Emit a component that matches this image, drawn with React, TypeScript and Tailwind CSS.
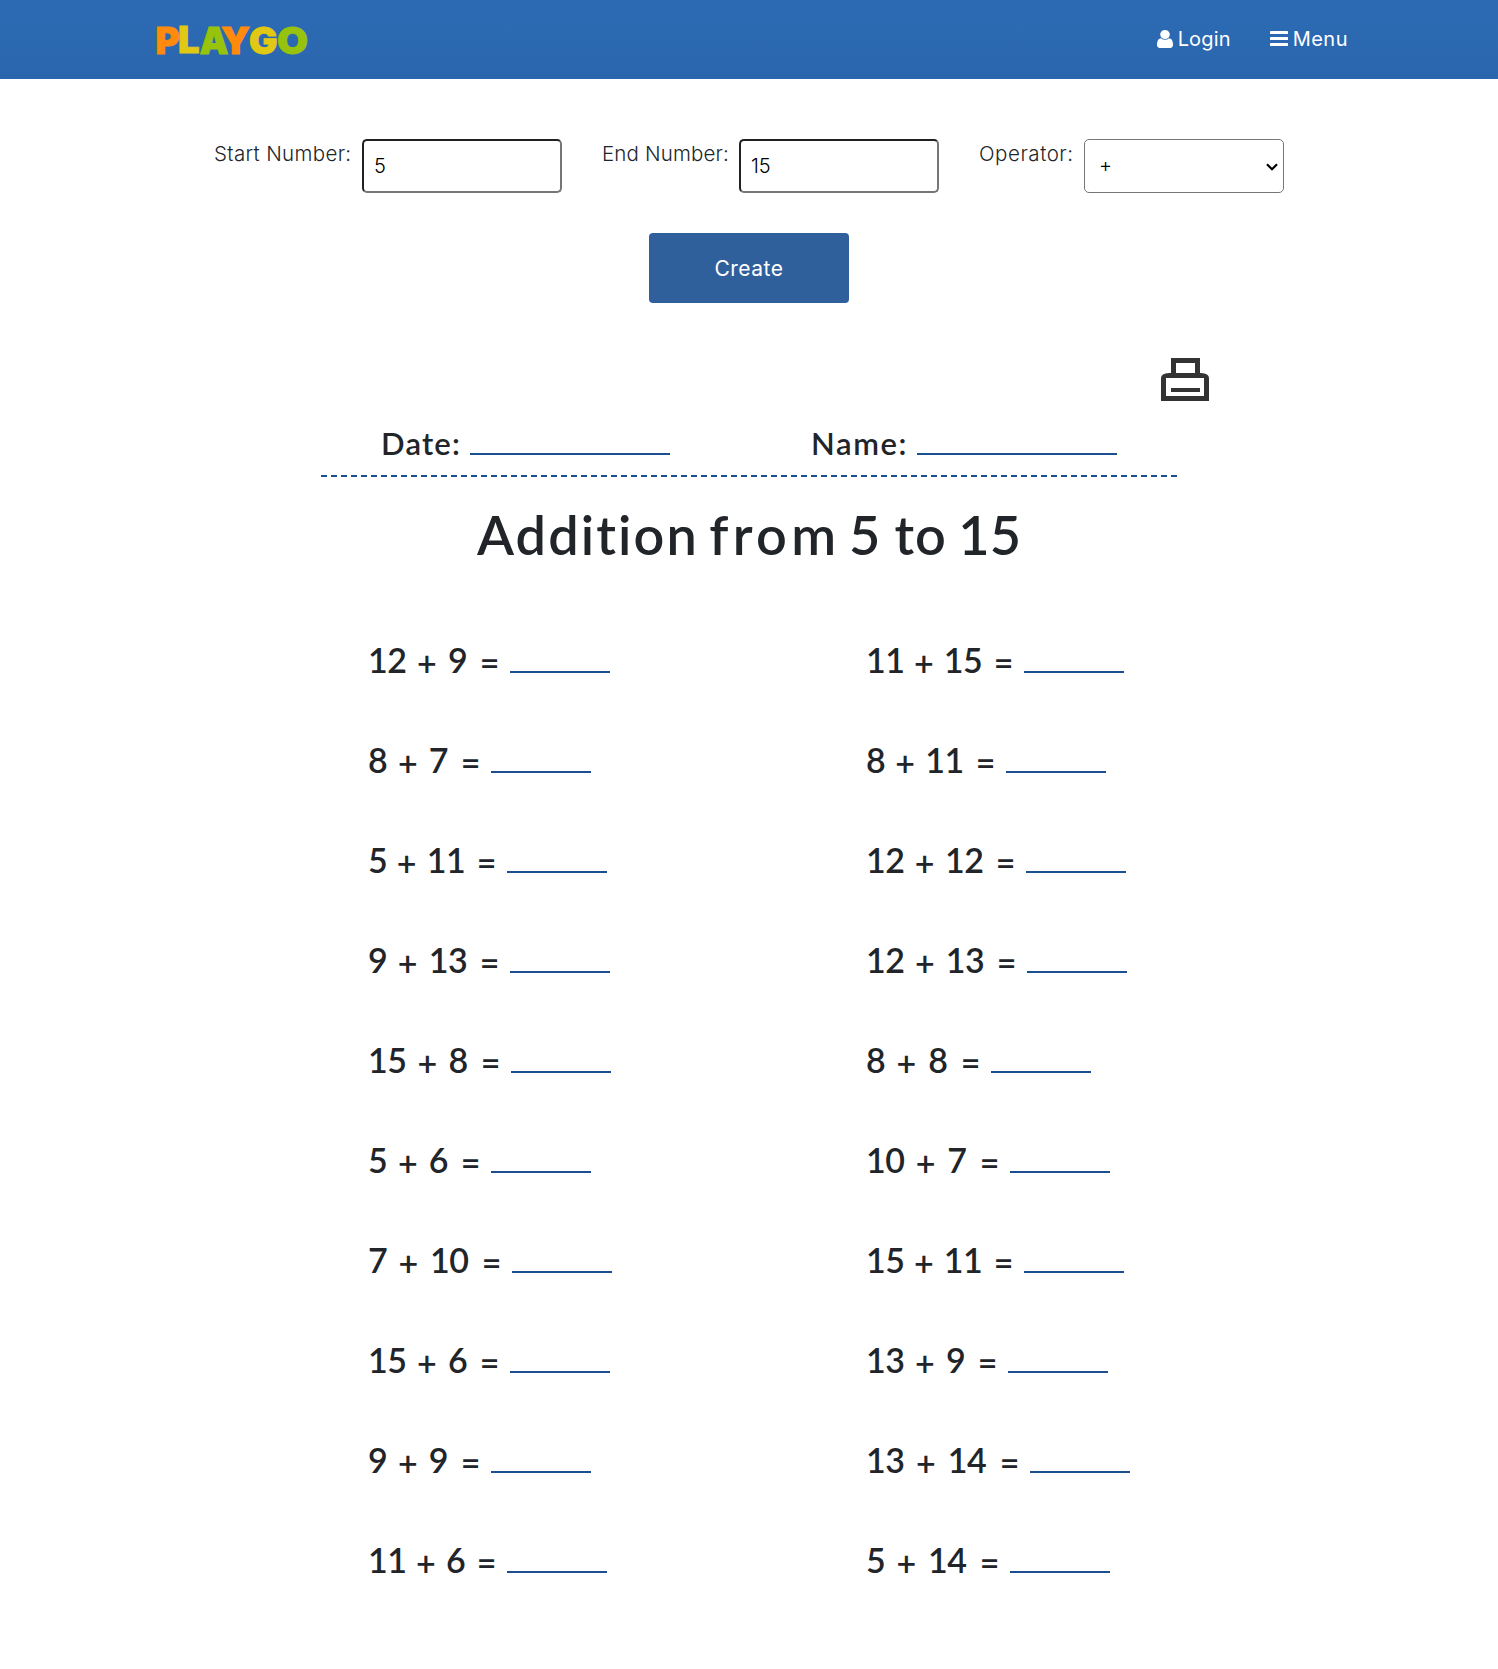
type Problem = { tokens: string[]; width: string };

const leftProblems: Problem[] = [
  { tokens: ['12', '+', '9', '='], width: 'w-[131px]' },
  { tokens: ['8', '+', '7', '='], width: 'w-[112px]' },
  { tokens: ['5', '+', '11', '='], width: 'w-[128px]' },
  { tokens: ['9', '+', '13', '='], width: 'w-[131px]' },
  { tokens: ['15', '+', '8', '='], width: 'w-[132px]' },
  { tokens: ['5', '+', '6', '='], width: 'w-[112px]' },
  { tokens: ['7', '+', '10', '='], width: 'w-[133px]' },
  { tokens: ['15', '+', '6', '='], width: 'w-[131px]' },
  { tokens: ['9', '+', '9', '='], width: 'w-[112px]' },
  { tokens: ['11', '+', '6', '='], width: 'w-[128px]' },
];

const rightProblems: Problem[] = [
  { tokens: ['11', '+', '15', '='], width: 'w-[147px]' },
  { tokens: ['8', '+', '11', '='], width: 'w-[129px]' },
  { tokens: ['12', '+', '12', '='], width: 'w-[149px]' },
  { tokens: ['12', '+', '13', '='], width: 'w-[150px]' },
  { tokens: ['8', '+', '8', '='], width: 'w-[114px]' },
  { tokens: ['10', '+', '7', '='], width: 'w-[133px]' },
  { tokens: ['15', '+', '11', '='], width: 'w-[147px]' },
  { tokens: ['13', '+', '9', '='], width: 'w-[131px]' },
  { tokens: ['13', '+', '14', '='], width: 'w-[153px]' },
  { tokens: ['5', '+', '14', '='], width: 'w-[133px]' },
];

function Logo() {
  const letters = [
    { ch: 'P', x: 5.5, y: 53.5, len: 24, fill: '#ff8a0c' },
    { ch: 'L', x: 28, y: 52.5, len: 21.5, fill: '#e0c814' },
    { ch: 'Y', x: 71, y: 53.5, len: 29, fill: '#ff8a0c' },
    { ch: 'A', x: 49.5, y: 53.5, len: 29, fill: '#98c30c' },
    { ch: 'G', x: 99, y: 53.5, len: 28.5, fill: '#e0c814' },
    { ch: 'O', x: 127, y: 53.5, len: 31, fill: '#98c30c' },
  ];
  return (
    <svg width="170" height="79" viewBox="0 0 170 79" aria-label="PlayGo" className="block">
      {letters.map((l) => (
        <text
          key={l.ch}
          x={l.x}
          y={l.y}
          textLength={l.len}
          lengthAdjust="spacingAndGlyphs"
          fill={l.fill}
          stroke={l.fill}
          strokeWidth="0.9"
          fontFamily="Inter, sans-serif"
          fontWeight="900"
          fontSize="37"
        >
          {l.ch}
        </text>
      ))}
    </svg>
  );
}

function UserIcon() {
  return (
    <svg width="16" height="18" viewBox="0 128 1280 1536" preserveAspectRatio="none" fill="currentColor">
      <path d="M1280 1399q0 109-62.5 187t-150.5 78h-854q-88 0-150.5-78t-62.5-187q0-85 8.5-160.5t31.5-152 58.5-131 94-89 134.5-34.5q131 128 313 128t313-128q76 0 134.5 34.5t94 89 58.5 131 31.5 152 8.5 160.5zm-256-887q0 159-112.5 271.5t-271.5 112.5-271.5-112.5-112.5-271.5 112.5-271.5 271.5-112.5 271.5 112.5 112.5 271.5z" />
    </svg>
  );
}

function BarsIcon() {
  return (
    <svg width="18" height="15" viewBox="0 0 18 15" fill="currentColor">
      <rect x="0" y="0" width="18" height="3" rx="0.6" />
      <rect x="0" y="6" width="18" height="3" rx="0.6" />
      <rect x="0" y="12" width="18" height="3" rx="0.6" />
    </svg>
  );
}

function PrinterIcon() {
  return (
    <svg width="48" height="43" viewBox="0 0 48 43" fill="#333333">
      <path
        fillRule="evenodd"
        d="M10 0H39V15H40Q48 15.5 48 20V43H0V20Q0 15.5 8 15H10ZM15 5V15H34V5ZM5 20V38H43V20Z"
      />
      <rect x="10" y="30" width="29" height="4" />
    </svg>
  );
}

function ProblemColumn({ problems }: { problems: Problem[] }) {
  return (
    <div>
      {problems.map((p, i) => (
        <div key={i} className="flex h-[100px] items-baseline gap-[11px] text-[34px] leading-[100px] font-semibold">
          <div className={`flex justify-between tracking-[-0.5px] ${p.width}`}>
            {p.tokens.map((t, j) => (
              <span
                key={j}
                className={
                  t === '+' ? 'relative top-[3px] right-px' : t === '=' ? 'relative top-[2px]' : j === 2 ? 'relative right-px' : ''
                }
              >
                {t}
              </span>
            ))}
          </div>
          <span className="inline-block h-[2px] w-[100px] bg-[#1c4f8f]" />
        </div>
      ))}
    </div>
  );
}

const inputClass =
  'h-[54px] w-[200px] rounded-[5px] border-2 border-t-[#212121] border-l-[#212121] border-r-[#767676] border-b-[#767676] bg-white px-[10px] text-black outline-none';

export default function App() {
  return (
    <div className="min-h-[1669px] bg-white font-['Inter',sans-serif] text-[20px] text-[#212529]">
      <header className="h-[79px] bg-linear-to-b from-[#2c6bb4] to-[#2a66ae]">
        <div className="mx-auto flex h-full w-[1198px] items-center justify-between">
          <Logo />
          <nav className="mb-[2px] flex h-[30px] items-center text-white">
            <a className="flex w-[113px] items-center gap-[5px] tracking-[0.15px]">
              <UserIcon />
              Login
            </a>
            <a className="flex items-center gap-[5px] tracking-[0.5px]">
              <BarsIcon />
              Menu
            </a>
          </nav>
        </div>
      </header>

      <form className="mt-[60px]" onSubmit={(e) => e.preventDefault()}>
        <div className="flex justify-center gap-10 font-[350]">
          <div className="flex">
            <label className="w-[148px] text-[20.5px] leading-[30px] tracking-[0.35px] whitespace-nowrap">Start Number:</label>
            <input className={inputClass} defaultValue="5" />
          </div>
          <div className="flex">
            <label className="w-[137px] text-[20.5px] leading-[30px] tracking-[0.15px] whitespace-nowrap">End Number:</label>
            <input className={inputClass} defaultValue="15" />
          </div>
          <div className="flex">
            <label className="w-[105px] text-[20.5px] leading-[30px] tracking-[0.55px] whitespace-nowrap">Operator:</label>
            <div className="relative">
              <select className="h-[54px] w-[200px] appearance-none rounded-[5px] border border-[#767676] bg-white pb-[2px] pl-[14px] text-black">
                <option>+</option>
              </select>
              <svg
                className="pointer-events-none absolute top-[24px] right-[6px]"
                width="12"
                height="8"
                viewBox="0 0 12 8"
                fill="none"
                stroke="#000"
                strokeWidth="2.2"
              >
                <path d="M1 1.2L6 6.2L11 1.2" />
              </svg>
            </div>
          </div>
        </div>
        <div className="mt-10 flex justify-center">
          <button className="h-[70px] w-[200px] rounded-[4px] bg-[#2f609b] pt-px text-[21px] tracking-[0.5px] text-white">
            Create
          </button>
        </div>
      </form>

      <div className="mx-auto mt-[55px] flex w-[920px] justify-end">
        <PrinterIcon />
      </div>

      <main className="font-['Lato',sans-serif]">
        <div className="mx-auto mt-[22px] flex h-10 w-[856px] items-baseline pl-[60px] text-[31px] leading-10 font-semibold">
          <span className="w-[89px] tracking-[1.2px]">Date:</span>
          <span className="inline-block h-[2px] w-[200px] bg-[#1c4f8f]" />
          <span className="ml-[141px] w-[106px] tracking-[1.6px]">Name:</span>
          <span className="inline-block h-[2px] w-[200px] bg-[#1c4f8f]" />
        </div>
        <div className="mx-auto mt-3 h-[2px] w-[856px] bg-[repeating-linear-gradient(90deg,#1c4f8f_0_6px,transparent_6px_10px)]" />
        <h1 className="mx-auto mt-[28px] flex w-[544px] text-[54px] leading-[60px] font-semibold whitespace-nowrap">
          <span className="w-[236px] tracking-[2.1px]">Addition</span>
          <span className="w-[142px] tracking-[4.3px]">from</span>
          <span className="w-[46px]">5</span>
          <span className="w-[65px] tracking-[1px]">to</span>
          <span>15</span>
        </h1>
        <div className="mx-auto mt-[45px] flex w-[762px]">
          <div className="w-[498px] shrink-0">
            <ProblemColumn problems={leftProblems} />
          </div>
          <ProblemColumn problems={rightProblems} />
        </div>
      </main>
    </div>
  );
}
